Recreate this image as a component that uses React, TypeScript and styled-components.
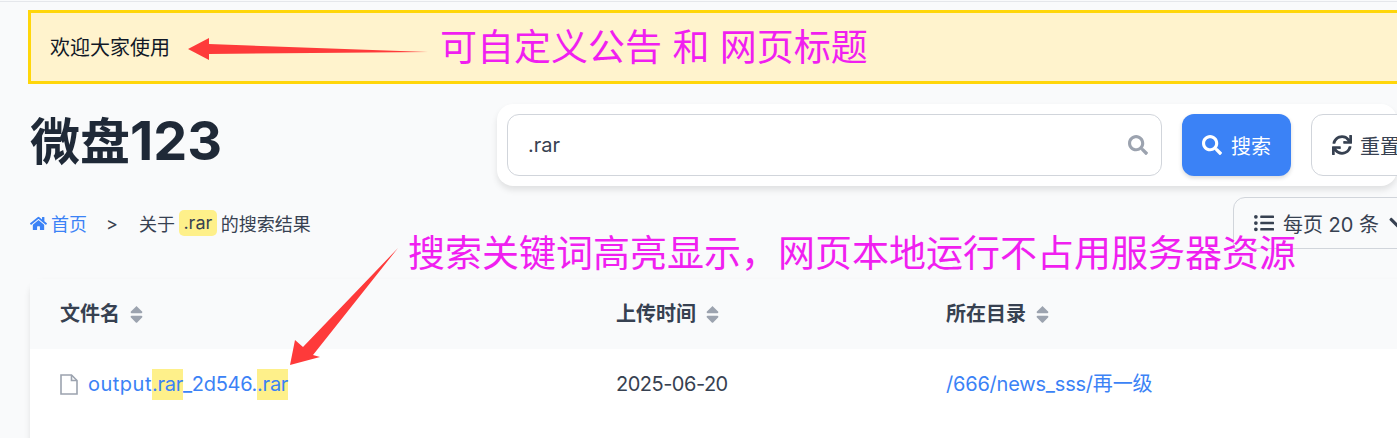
import React from "react";
import styled, { createGlobalStyle } from "styled-components";
import { FaChevronDown, FaHome, FaListUl, FaSearch, FaSort, FaSync } from "react-icons/fa";

const GlobalStyle = createGlobalStyle`
  html, body {
    margin: 0;
    padding: 0;
    height: 100%;
    overflow: hidden;
    background: #f9fafb;
  }
  * { box-sizing: border-box; }
`;

const FONT = `Inter, "Noto Sans CJK SC", sans-serif`;

const Page = styled.div`
  position: relative;
  width: 1397px;
  height: 438px;
  overflow: hidden;
  padding: 0 0 0 28px;
  font-family: ${FONT};
  color: #374151;
`;

const TopRule = styled.div`
  height: 1px;
  margin: 1px 0 8px -28px;
  background: #e5e7eb;
`;

const Notice = styled.div`
  width: 1400px;
  height: 74px;
  border: 3px solid #ffd60a;
  background: #fff3cd;
  color: #111827;
  font-size: 20px;
  display: flex;
  align-items: center;
  padding: 0 0 2px 19px;
`;

const Header = styled.header`
  display: flex;
  align-items: flex-start;
  width: 1500px;
  margin-top: 20px;
  padding-left: 2px;
`;

const Title = styled.h1`
  margin: 0;
  width: 467px;
  height: 82px;
  flex: none;
  font-size: 50px;
  line-height: 74px;
  font-weight: 700;
  color: #1f2937;
`;

const TitleNumber = styled.span`
  font-size: 54px;
`;

const SearchPanel = styled.div`
  display: flex;
  align-items: center;
  gap: 20px;
  width: 900px;
  height: 82px;
  padding: 10px;
  border-radius: 16px;
  background: #fff;
  box-shadow: 0 4px 6px rgba(0, 0, 0, 0.1);
`;

const InputBox = styled.div`
  width: 655px;
  height: 62px;
  flex: none;
  display: flex;
  align-items: center;
  justify-content: space-between;
  padding: 0 13px 0 20px;
  border: 1px solid #d1d5db;
  border-radius: 12px;
  font-size: 20px;
  color: #374151;
  svg {
    color: #9ca3af;
    font-size: 20px;
  }
`;

const Button = styled.button<{ $primary?: boolean }>`
  height: 62px;
  flex: none;
  display: flex;
  align-items: center;
  gap: ${(p) => (p.$primary ? "9px" : "8px")};
  padding: 0 20px;
  width: ${(p) => (p.$primary ? "109px" : "120px")};
  border-radius: 12px;
  border: ${(p) => (p.$primary ? "none" : "1px solid #d1d5db")};
  background: ${(p) => (p.$primary ? "#3b82f6" : "#fff")};
  color: ${(p) => (p.$primary ? "#fff" : "#374151")};
  box-shadow: ${(p) => (p.$primary ? "0 2px 4px rgba(0, 0, 0, 0.15)" : "none")};
  font-family: ${FONT};
  font-size: 20px;
  svg {
    font-size: 20px;
    flex: none;
  }
`;

const CrumbRow = styled.div`
  display: flex;
  align-items: center;
  justify-content: space-between;
  width: 1500px;
  height: 52px;
  margin-top: 11px;
  padding-left: 2px;
`;

const Crumbs = styled.nav`
  display: flex;
  align-items: center;
  font-size: 18px;
`;

const HomeLink = styled.a`
  display: flex;
  align-items: center;
  gap: 4px;
  color: #3b82f6;
  svg { font-size: 17px; }
`;

const Separator = styled.span`
  margin: 0 21px 0 19px;
`;

const Keyword = styled.span`
  background: #fef08a;
  border-radius: 5px;
  line-height: 26px;
  padding: 0 4.5px;
  margin: 0 4px;
`;

const PerPage = styled.div`
  display: flex;
  align-items: center;
  gap: 9px;
  width: 200px;
  height: 52px;
  margin-right: 95px;
  padding: 0 20px;
  border: 1px solid #d1d5db;
  border-radius: 12px 12px 0 0;
  font-size: 20px;
  white-space: nowrap;
  svg { font-size: 20px; flex: none; }
`;

const TableCard = styled.section`
  width: 1400px;
  height: 180px;
  margin: 30px 0 0 2px;
  background: #fff;
  border-radius: 12px 0 0 0;
  box-shadow: 0 4px 6px rgba(0, 0, 0, 0.1);
`;

const Row = styled.div<{ $head?: boolean }>`
  display: grid;
  grid-template-columns: 556px 330px 1fr;
  align-items: center;
  height: 70px;
  padding-left: 30px;
  font-size: 20px;
  line-height: 30px;
  background: ${(p) => (p.$head ? "#f9fafb" : "#fff")};
`;

const HeadCell = styled.div`
  display: flex;
  align-items: center;
  gap: 6px;
  font-weight: 700;
  font-size: 20px;
  color: #374151;
  svg {
    color: #9ca3af;
    font-size: 21px;
  }
`;

const FileCell = styled.div`
  display: flex;
  align-items: center;
  gap: 10px;
  svg {
    flex: none;
  }
`;

const DateCell = styled.div`
  letter-spacing: -0.5px;
`;

const BlueLink = styled.a<{ $track?: number }>`
  color: #3b82f6;
  letter-spacing: ${(p) => p.$track ?? 0}px;
`;

const Part = styled.span<{ $track: number }>`
  letter-spacing: ${(p) => p.$track}px;
`;

const Mark = styled.mark`
  display: inline-block;
  background: #fef08a;
  color: #3b82f6;
  line-height: 31px;
  letter-spacing: -0.25px;
`;

const Annotation = styled.div<{ $left: number; $top: number }>`
  position: absolute;
  left: ${(p) => p.$left}px;
  top: ${(p) => p.$top}px;
  font-size: 37px;
  line-height: 46px;
  color: #f01ff0;
  white-space: pre;
`;

const ArrowLayer = styled.svg`
  position: absolute;
  left: 0;
  top: 0;
  pointer-events: none;
`;

export default function App() {
  return (
    <Page>
      <GlobalStyle />
      <TopRule />
      <Notice>欢迎大家使用</Notice>
      <Header>
        <Title>
          微盘<TitleNumber>123</TitleNumber>
        </Title>
        <SearchPanel>
          <InputBox>
            .rar
            <FaSearch />
          </InputBox>
          <Button $primary>
            <FaSearch />
            搜索
          </Button>
          <Button>
            <FaSync />
            重置
          </Button>
        </SearchPanel>
      </Header>
      <CrumbRow>
        <Crumbs>
          <HomeLink>
            <FaHome />
            首页
          </HomeLink>
          <Separator>&gt;</Separator>
          关于
          <Keyword>.rar</Keyword>
          的搜索结果
        </Crumbs>
        <PerPage>
          <FaListUl />
          每页 20 条
          <FaChevronDown />
        </PerPage>
      </CrumbRow>
      <TableCard>
        <Row $head>
          <HeadCell>
            文件名
            <FaSort />
          </HeadCell>
          <HeadCell>
            上传时间
            <FaSort />
          </HeadCell>
          <HeadCell>
            所在目录
            <FaSort />
          </HeadCell>
        </Row>
        <Row>
          <FileCell>
            <svg width="18" height="21" viewBox="0 0 18 21" fill="none" stroke="#9ca3af" strokeWidth="1.6">
              <path d="M1 1h10.5L17 6.5V20H1z" />
              <path d="M11.5 1v5.5H17" />
            </svg>
            <BlueLink>
              <Part $track={0.5}>output</Part>
              <Mark>.rar</Mark>
              <Part $track={-0.3}>_2d546.</Part>
              <Mark>.rar</Mark>
            </BlueLink>
          </FileCell>
          <DateCell>2025-06-20</DateCell>
          <BlueLink $track={-0.2}>/666/news_sss/再一级</BlueLink>
        </Row>
      </TableCard>

      <Annotation $left={440} $top={25}>可自定义公告 和 网页标题</Annotation>
      <Annotation $left={408} $top={231}>{"搜索关键词高亮显示\uFF0C网页本地运行不占用服务器资源"}</Annotation>
      <ArrowLayer width="1397" height="438" viewBox="0 0 1397 438">
        <polygon points="188,49 209,38 209,44 428,52 209,54 209,60" fill="#fe3a3a" />
        <polygon points="290,365 295,340 303,347 398,248 313,355 320,357" fill="#fe3a3a" />
      </ArrowLayer>
    </Page>
  );
}
